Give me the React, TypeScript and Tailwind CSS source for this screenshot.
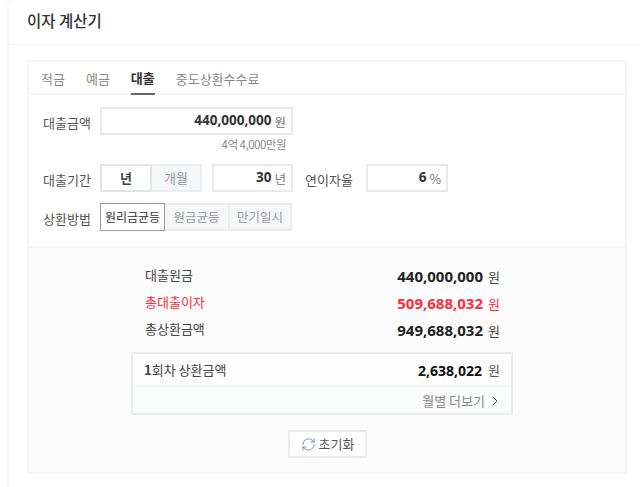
import React from 'react';
import { ChevronRight, RefreshCw } from 'lucide-react';

const kr = '[font-family:"Noto_Sans_CJK_KR",sans-serif]';
const num = '[font-family:"Open_Sans","Noto_Sans_CJK_KR",sans-serif]';

function Field({ className, value, unit }: { className: string; value: string; unit: string }) {
  return (
    <div className={`h-[28px] border-2 border-[#e8e8e8] bg-white flex items-center justify-end pr-[5px] ${className}`}>
      <span className={`${num} text-[13.5px] font-bold text-[#333] -mt-[2px]`}>{value}</span>
      <span className="text-[12.5px] text-[#777] ml-[3px] mt-[3px]">{unit}</span>
    </div>
  );
}

function ResultRow({ label, value, red }: { label: string; value: string; red?: boolean }) {
  return (
    <div className={`h-[27px] flex items-center justify-between pl-[14px] pr-[13px] ${red ? 'text-[#ff2d3b]' : 'text-[#444]'}`}>
      <span className="text-[13px] -mt-[1px]">{label}</span>
      <span className="flex items-center mt-[2px]">
        <span className={`${num} text-[15px] font-bold ${red ? '' : 'text-[#222]'}`}>{value}</span>
        <span className="text-[13px] ml-[5px]">원</span>
      </span>
    </div>
  );
}

export default function App() {
  const tabs = ['적금', '예금', '대출', '중도상환수수료'];

  return (
    <div className={`w-[640px] h-[487px] overflow-hidden bg-white ${kr}`}>
      <div className="ml-[7px] -mt-[3px] w-[700px] h-[520px] border-2 border-[#f5f5f5] rounded-tl-[10px]">
        <div className="h-[46px] border-b border-[#f2f2f2] pl-[18px] flex items-center">
          <h1 className="text-[15.5px] font-medium text-[#333] -mt-[2px]">이자 계산기</h1>
        </div>

        <div className="pt-[15px] pl-[18px]">
          <div className="w-[600px] h-[414px] border-2 border-[#f5f5f5] flex flex-col">
            {/* Tabs */}
            <div className="h-[33px] border-b-2 border-[#f5f5f5] flex pl-[12px] gap-[21px] shrink-0">
              {tabs.map((tab) => (
                <div
                  key={tab}
                  className={`h-[33px] flex items-center text-[13px] ${
                    tab === '대출' ? 'font-bold text-[#333] border-b-2 border-[#666]' : 'text-[#888]'
                  }`}
                >
                  {tab}
                </div>
              ))}
            </div>

            {/* Form */}
            <div className="h-[153px] border-b-2 border-[#f5f5f5] pt-[12px] pl-[14px] shrink-0">
              <div className="flex items-center">
                <span className="w-[57px] text-[13px] text-[#555] mt-[4px]">대출금액</span>
                <Field className="w-[193px]" value="440,000,000" unit="원" />
              </div>
              <div className="w-[243px] h-[18px] text-right text-[11.5px] tracking-[-0.5px] text-[#888] leading-[18px]">
                4억 4,000만원
              </div>
              <div className="flex items-center mt-[11px]">
                <span className="w-[57px] text-[13px] text-[#555] mt-[4px]">대출기간</span>
                <div className="w-[52px] h-[28px] border-2 border-[#e4e4e4] bg-white flex items-center justify-center text-[13px] font-bold text-[#444]">년</div>
                <div className="w-[50px] h-[28px] border-2 border-l-0 border-[#ececec] bg-[#f6f7f8] flex items-center justify-center text-[13px] text-[#999]">개월</div>
                <Field className="w-[81px] ml-[10px]" value="30" unit="년" />
                <span className="ml-[12px] w-[61px] text-[13px] text-[#555] mt-[4px]">연이자율</span>
                <Field className="w-[82px]" value="6" unit="%" />
              </div>
              <div className="flex items-center mt-[11px]">
                <span className="w-[57px] text-[13px] text-[#555] mt-[4px]">상환방법</span>
                <div className="w-[65px] h-[28px] border border-[#999] bg-white flex items-center justify-center text-[12px] text-[#333]">원리금균등</div>
                <div className="w-[63px] h-[28px] border-y-2 border-[#ececec] bg-[#f6f7f8] flex items-center justify-center text-[12.5px] text-[#999]">원금균등</div>
                <div className="w-[64px] h-[28px] border-2 border-[#ececec] bg-[#f6f7f8] flex items-center justify-center text-[12.5px] text-[#999]">만기일시</div>
              </div>
            </div>

            {/* Result */}
            <div className="flex-1 bg-[#fcfcfc] pt-[14px] pl-[102px] pr-[112px]">
              <ResultRow label="대출원금" value="440,000,000" />
              <ResultRow label="총대출이자" value="509,688,032" red />
              <ResultRow label="총상환금액" value="949,688,032" />

              <div className="mt-[9px] h-[63px] border-2 border-[#ebebeb]">
                <div className="h-[32px] border-b border-[#f4f4f4] bg-[#fdfdfd] flex items-center justify-between pl-[11px] pr-[11px] pt-[1px]">
                  <span className="text-[13px] text-[#444]"><b>1</b>회차 상환금액</span>
                  <span className="flex items-center text-[#555]">
                    <span className={`${num} text-[14px] font-bold text-[#111]`}>2,638,022</span>
                    <span className="text-[13px] ml-[6px]">원</span>
                  </span>
                </div>
                <div className="h-[27px] bg-[#fafbfb] flex items-center justify-end pr-[11px] pt-[2px] text-[13px] text-[#888]">
                  월별 더보기
                  <ChevronRight className="w-[16px] h-[16px] ml-[2px] -mr-[3px] text-[#555]" strokeWidth={1.5} />
                </div>
              </div>

              <div className="mt-[15px] pl-[157px]">
                <button className="w-[79px] h-[28px] border-2 border-[#ebebeb] bg-white flex items-center justify-center gap-[3px] text-[13px] text-[#555]">
                  <RefreshCw className="w-[15px] h-[15px] text-[#5b8bd0]" strokeWidth={1.5} />
                  초기화
                </button>
              </div>
            </div>
          </div>
        </div>
      </div>
    </div>
  );
}
